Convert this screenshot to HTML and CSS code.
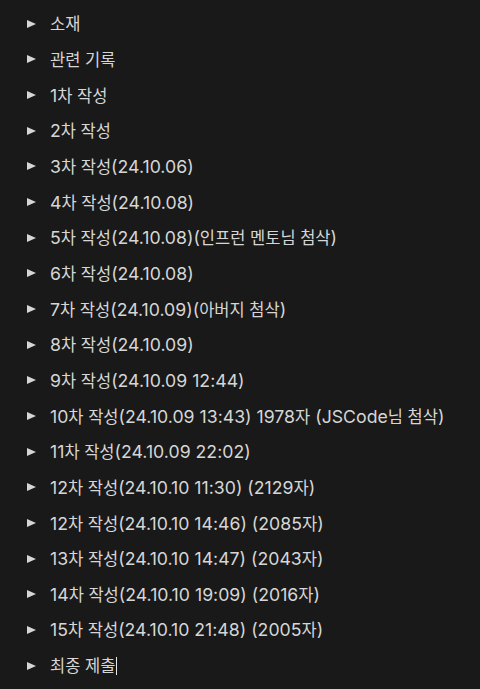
FILE: index.html
```html
<!DOCTYPE html>
<html lang="ko">
<head>
<meta charset="utf-8">
<link rel="stylesheet" href="styles.css">
</head>
<body>
<div class="page">
  <div class="toggle"><span class="tri"></span><span class="label"><span class="k">소재</span></span></div>
  <div class="toggle"><span class="tri"></span><span class="label"><span class="k">관련 기록</span></span></div>
  <div class="toggle"><span class="tri"></span><span class="label">1<span class="k">차 작성</span></span></div>
  <div class="toggle"><span class="tri"></span><span class="label">2<span class="k">차 작성</span></span></div>
  <div class="toggle"><span class="tri"></span><span class="label">3<span class="k">차 작성</span>(24.10.06)</span></div>
  <div class="toggle"><span class="tri"></span><span class="label">4<span class="k">차 작성</span>(24.10.08)</span></div>
  <div class="toggle"><span class="tri"></span><span class="label">5<span class="k">차 작성</span>(24.10.08)(<span class="k">인프런 멘토님 첨삭</span>)</span></div>
  <div class="toggle"><span class="tri"></span><span class="label">6<span class="k">차 작성</span>(24.10.08)</span></div>
  <div class="toggle"><span class="tri"></span><span class="label">7<span class="k">차 작성</span>(24.10.09)(<span class="k">아버지 첨삭</span>)</span></div>
  <div class="toggle"><span class="tri"></span><span class="label">8<span class="k">차 작성</span>(24.10.09)</span></div>
  <div class="toggle"><span class="tri"></span><span class="label">9<span class="k">차 작성</span>(24.10.09 12:44)</span></div>
  <div class="toggle"><span class="tri"></span><span class="label">10<span class="k">차 작성</span>(24.10.09 13:43) 1978<span class="k">자</span> (JSCode<span class="k">님 첨삭</span>)</span></div>
  <div class="toggle"><span class="tri"></span><span class="label">11<span class="k">차 작성</span>(24.10.09 22:02)</span></div>
  <div class="toggle"><span class="tri"></span><span class="label">12<span class="k">차 작성</span>(24.10.10 11:30) (2129<span class="k">자</span>)</span></div>
  <div class="toggle"><span class="tri"></span><span class="label">12<span class="k">차 작성</span>(24.10.10 14:46) (2085<span class="k">자</span>)</span></div>
  <div class="toggle"><span class="tri"></span><span class="label">13<span class="k">차 작성</span>(24.10.10 14:47) (2043<span class="k">자</span>)</span></div>
  <div class="toggle"><span class="tri"></span><span class="label">14<span class="k">차 작성</span>(24.10.10 19:09) (2016<span class="k">자</span>)</span></div>
  <div class="toggle"><span class="tri"></span><span class="label">15<span class="k">차 작성</span>(24.10.10 21:48) (2005<span class="k">자</span>)</span></div>
  <div class="toggle"><span class="tri"></span><span class="label"><span class="k">최종 제출</span><span class="caret"></span></span></div>
</div>
</body>
</html>
```
FILE: styles.css
```css
html, body {
  margin: 0;
  padding: 0;
  background: #191919;
  height: 100%;
}
.page {
  padding-top: 6px;
  padding-left: 26px;
  font-family: Inter, "Noto Sans CJK KR", sans-serif;
  font-size: 17.7px;
  color: #d6d6d6;
}
.toggle {
  display: flex;
  align-items: center;
  height: 35.67px;
}
.tri {
  flex: none;
  width: 0;
  height: 0;
  border-top: 4.5px solid transparent;
  border-bottom: 4.5px solid transparent;
  border-left: 9px solid #d6d6d6;
  margin-left: 1px;
  margin-right: 14px;
}
.label {
  display: block;
  line-height: 24px;
  white-space: nowrap;
}
.k {
  font-family: "Noto Sans CJK KR", sans-serif;
  font-size: 16.5px;
}
.caret {
  display: inline-block;
  width: 1px;
  height: 18px;
  background: #e6e6e6;
  margin-left: 1px;
  vertical-align: -3px;
}
```
